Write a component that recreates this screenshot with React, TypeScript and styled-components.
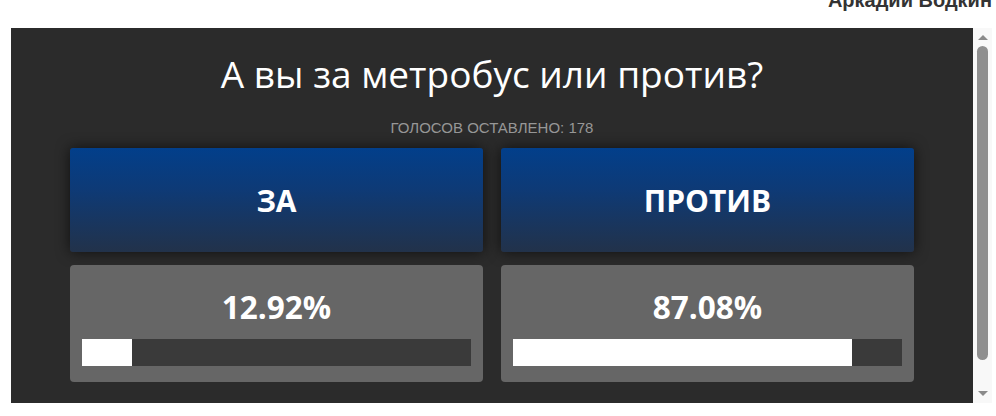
import React from 'react';
import styled, { createGlobalStyle } from 'styled-components';

const GlobalStyle = createGlobalStyle`
  html, body {
    margin: 0;
    padding: 0;
    background: #ffffff;
    font-family: "Open Sans", "Liberation Sans", sans-serif;
  }
`;

const Page = styled.div`
  width: 996px;
  height: 416px;
  overflow: hidden;
  display: flex;
  flex-direction: column;
`;

const Header = styled.div`
  height: 28px;
  display: flex;
  justify-content: flex-end;
  align-items: flex-end;
  padding-right: 4px;
`;

const UserName = styled.div`
  font-family: "Liberation Sans", Arial, sans-serif;
  font-weight: bold;
  font-size: 20px;
  line-height: 1;
  color: #333333;
  margin-bottom: 18px;
  white-space: nowrap;
`;

const Body = styled.div`
  display: flex;
  padding-left: 11px;
  height: 375px;
`;

const Panel = styled.div`
  width: 962px;
  background: #2b2b2b;
  padding: 0 59px;
  box-sizing: border-box;
  display: flex;
  flex-direction: column;
  align-items: stretch;
`;

const Title = styled.h1`
  margin: 24px 0 0;
  font-weight: 400;
  font-size: 37px;
  line-height: 44px;
  color: #ffffff;
  text-align: center;
`;

const VoteCount = styled.div`
  margin-top: 24px;
  font-family: "Liberation Sans", Arial, sans-serif;
  font-size: 15px;
  line-height: 16px;
  color: #979797;
  text-transform: uppercase;
  text-align: center;
`;

const Grid = styled.div`
  margin-top: 12px;
  display: grid;
  grid-template-columns: 1fr 1fr;
  column-gap: 18px;
  row-gap: 13px;
`;

const VoteButton = styled.button`
  height: 104px;
  border: none;
  border-radius: 3px;
  background: linear-gradient(to bottom, #023f8b 0%, #0e3a76 40%, #22324a 100%);
  box-shadow: 0 0 14px rgba(0, 0, 0, 0.65);
  color: #ffffff;
  font-family: "Open Sans", sans-serif;
  font-weight: 700;
  font-size: 30px;
  cursor: pointer;
`;

const ResultBox = styled.div`
  height: 117px;
  background: #666666;
  border-radius: 4px;
  padding: 0 12px 16px;
  box-sizing: border-box;
  display: flex;
  flex-direction: column;
  justify-content: flex-end;
`;

const Percent = styled.div`
  font-weight: 700;
  font-size: 31.5px;
  line-height: 40px;
  color: #ffffff;
  text-align: center;
  margin-bottom: 12px;
`;

const Bar = styled.div`
  height: 27px;
  background: #3a3a3a;
`;

const BarFill = styled.div`
  height: 100%;
  background: #ffffff;
`;

const Scrollbar = styled.div`
  width: 19px;
  background: #f8f8f8;
  display: flex;
  flex-direction: column;
  align-items: center;
  padding: 7px 0;
  box-sizing: border-box;
`;

const Arrow = styled.div<{ $down?: boolean }>`
  width: 0;
  height: 0;
  border-left: 5px solid transparent;
  border-right: 5px solid transparent;
  ${({ $down }) =>
    $down ? 'border-top: 5px solid #8a8a8a;' : 'border-bottom: 5px solid #8a8a8a;'}
`;

const Thumb = styled.div`
  width: 11px;
  height: 314px;
  margin: 6px 0 auto;
  border-radius: 6px;
  background: #8f8f8f;
`;

const options = [
  { label: 'ЗА', percent: 12.92 },
  { label: 'ПРОТИВ', percent: 87.08 },
];

export default function App() {
  return (
    <Page>
      <GlobalStyle />
      <Header>
        <UserName>Аркадий Водкин</UserName>
      </Header>
      <Body>
        <Panel>
          <Title>А вы за метробус или против?</Title>
          <VoteCount>Голосов оставлено: 178</VoteCount>
          <Grid>
            {options.map(o => (
              <VoteButton key={o.label}>{o.label}</VoteButton>
            ))}
            {options.map(o => (
              <ResultBox key={o.label}>
                <Percent>{o.percent.toFixed(2)}%</Percent>
                <Bar>
                  <BarFill style={{ width: `${o.percent}%` }} />
                </Bar>
              </ResultBox>
            ))}
          </Grid>
        </Panel>
        <Scrollbar>
          <Arrow />
          <Thumb />
          <Arrow $down />
        </Scrollbar>
      </Body>
    </Page>
  );
}
